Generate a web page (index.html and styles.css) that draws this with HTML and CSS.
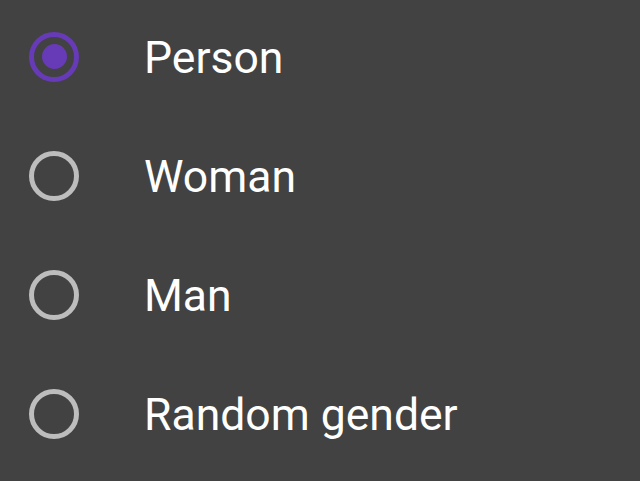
FILE: index.html
```html
<!DOCTYPE html>
<html>
<head>
<meta charset="utf-8">
<link rel="stylesheet" href="styles.css">
</head>
<body>
<div class="list">
  <div class="row"><span class="radio checked"><span class="dot"></span></span><span class="label">Person</span></div>
  <div class="row"><span class="radio"></span><span class="label">Woman</span></div>
  <div class="row"><span class="radio"></span><span class="label">Man</span></div>
  <div class="row"><span class="radio"></span><span class="label">Random gender</span></div>
</div>
</body>
</html>
```
FILE: styles.css
```css
html, body {
  margin: 0;
  padding: 0;
  background: #424242;
  height: 100%;
}
.list {
  display: flex;
  flex-direction: column;
  gap: 6px;
}
.row {
  display: flex;
  align-items: center;
  height: 113px;
  padding-left: 29px;
}
.radio {
  box-sizing: border-box;
  width: 50px;
  height: 50px;
  border: 5px solid #bdbdbd;
  border-radius: 50%;
  display: flex;
  align-items: center;
  justify-content: center;
  flex: none;
}
.radio.checked {
  border-color: #673ab7;
}
.dot {
  width: 25px;
  height: 25px;
  border-radius: 50%;
  background: #673ab7;
}
.label {
  margin-left: 65px;
  padding-top: 3px;
  font-family: Roboto, "Liberation Sans", sans-serif;
  font-size: 44.5px;
  color: #ffffff;
  line-height: 1;
}
```
